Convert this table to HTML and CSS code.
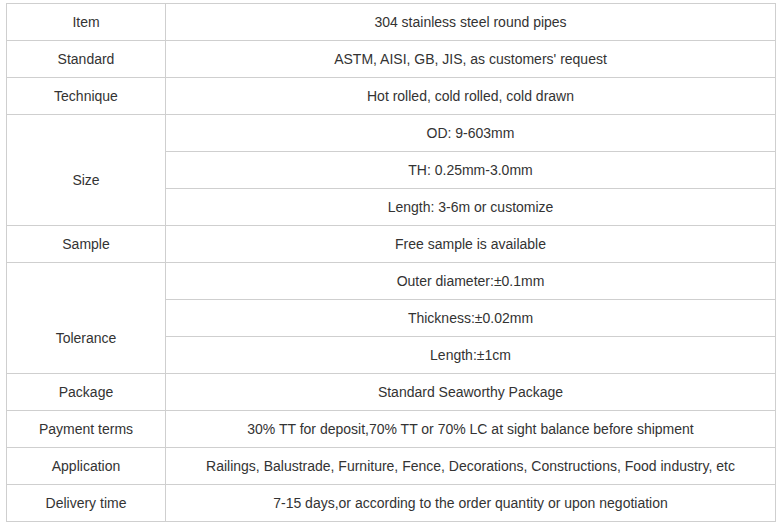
FILE: index.html
```html
<!DOCTYPE html>
<html>
<head>
<meta charset="utf-8">
<link rel="stylesheet" href="styles.css">
</head>
<body>
<div class="wrap">
<table class="spec">
<tbody>
<tr><td class="k">Item</td><td>304 stainless steel round pipes</td></tr>
<tr><td class="k">Standard</td><td>ASTM, AISI, GB, JIS, as customers' request</td></tr>
<tr><td class="k">Technique</td><td>Hot rolled, cold rolled, cold drawn</td></tr>
<tr><td class="k size" rowspan="3">Size</td><td>OD: 9-603mm</td></tr>
<tr><td>TH: 0.25mm-3.0mm</td></tr>
<tr><td>Length: 3-6m or customize</td></tr>
<tr><td class="k">Sample</td><td>Free sample is available</td></tr>
<tr><td class="k tol" rowspan="3">Tolerance</td><td>Outer diameter:±0.1mm</td></tr>
<tr><td>Thickness:±0.02mm</td></tr>
<tr><td>Length:±1cm</td></tr>
<tr><td class="k">Package</td><td>Standard Seaworthy Package</td></tr>
<tr><td class="k">Payment terms</td><td>30% TT for deposit,70% TT or 70% LC at sight balance before shipment</td></tr>
<tr><td class="k">Application</td><td>Railings, Balustrade, Furniture, Fence, Decorations, Constructions, Food industry, etc</td></tr>
<tr><td class="k">Delivery time</td><td>7-15 days,or according to the order quantity or upon negotiation</td></tr>
</tbody>
</table>
</div>
</body>
</html>
```
FILE: styles.css
```css
html, body {
  margin: 0;
  padding: 0;
  background: #fff;
}
.wrap {
  padding: 3px 0 0 6px;
}
.spec {
  border-collapse: collapse;
  width: 770px;
  table-layout: fixed;
  font-family: "Liberation Sans", Arial, sans-serif;
  font-size: 14px;
  color: #333;
}
.spec td {
  border: 1px solid #cfcfcf;
  height: 37px;
  padding: 0;
  text-align: center;
  vertical-align: middle;
  box-sizing: border-box;
}
.spec td.k {
  width: 159px;
}
.spec td.size {
  padding-top: 20px;
}
.spec td.tol {
  padding-top: 40px;
}
```
